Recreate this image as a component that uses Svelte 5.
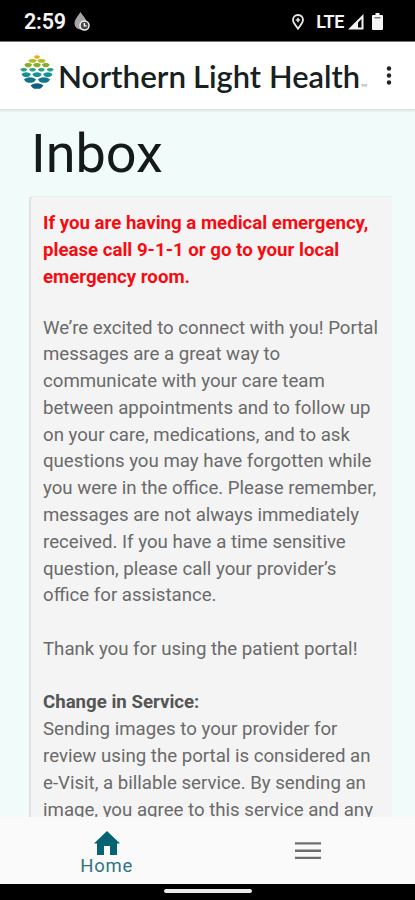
<script>
  const alert = [
    'If you are having a medical emergency,',
    'please call 9-1-1 or go to your local',
    'emergency room.',
  ]

  const intro = [
    'We’re excited to connect with you! Portal',
    'messages are a great way to',
    'communicate with your care team',
    'between appointments and to follow up',
    'on your care, medications, and to ask',
    'questions you may have forgotten while',
    'you were in the office. Please remember,',
    'messages are not always immediately',
    'received. If you have a time sensitive',
    'question, please call your provider’s',
    'office for assistance.',
  ]

  const service = [
    'Sending images to your provider for',
    'review using the portal is considered an',
    'e-Visit, a billable service. By sending an',
    'image, you agree to this service and any',
  ]

  // Rows of the logo: vertical centre, scale size and count
  const rows = [
    { y: 2,    n: 1, w: 6,    h: 3.4, step: 0,    color: '#f5a81c' },
    { y: 5.8,  n: 2, w: 8.4,  h: 3.8, step: 9,    color: '#b3bd21' },
    { y: 10.2, n: 3, w: 7.8,  h: 4.2, step: 8.8,  color: '#86ae2b' },
    { y: 14.8, n: 4, w: 7,    h: 3.6, step: 8.8,  color: '#2ba084' },
    { y: 19.6, n: 3, w: 9.4,  h: 4.6, step: 10.8, color: '#16919a' },
    { y: 25,   n: 2, w: 12,   h: 5.4, step: 14,   color: '#12738a' },
    { y: 31,   n: 1, w: 12.6, h: 5.6, step: 0,    color: '#105f7c' },
  ]

  const scales = rows.flatMap(r =>
    Array.from({ length: r.n }, (_, i) => ({
      ...r,
      x: 17 + (i - (r.n - 1) / 2) * r.step,
    }))
  )

  // Low crown on top, deep bowl below
  function scalePath({ x, y, w, h }) {
    const l = x - w / 2
    const r = x + w / 2
    const top = y - h / 2
    const bottom = y + h / 2
    return `M${l} ${y - h * 0.15}Q${x - w * 0.3} ${top} ${x} ${top}Q${x + w * 0.3} ${top} ${r} ${y - h * 0.15}C${x + w * 0.36} ${bottom} ${x + w * 0.2} ${bottom} ${x} ${bottom}C${x - w * 0.2} ${bottom} ${x - w * 0.36} ${bottom} ${l} ${y - h * 0.15}Z`
  }
</script>

<div class="screen">
  <div class="status">
    <span class="time">2:59</span>
    <svg class="drop" viewBox="0 0 16 20" width="16" height="20">
      <path d="M6.500 0C4 4 .5 7.600 .5 11.500a6 6 0 0 0 6 6c4 0 6.500-2.500 6.500-6C13 7.600 9 4 6.500 0Z" fill="#a5a5a5" />
      <circle cx="10.500" cy="13.500" r="4.500" fill="#444" stroke="#eee" stroke-width="1.500" />
      <path d="M10.300 11v2.800h2.300" fill="none" stroke="#fff" stroke-width="1.300" />
    </svg>
    <span class="spacer"></span>
    <svg class="pin" viewBox="0 0 12 16" width="12" height="16">
      <path d="M6 1C3 1 1 3.200 1 6c0 3.200 3 5.500 5 8.700C8 11.500 11 9.200 11 6c0-2.800-2-5-5-5Z" fill="none" stroke="#e8e8e8" stroke-width="1.800" />
      <path d="M6 3.800v4.400M3.800 6h4.400" stroke="#ddd" stroke-width="1.700" />
    </svg>
    <span class="lte">LTE</span>
    <svg class="signal" viewBox="0 0 16 16" width="16" height="16">
      <path d="M15.500 0V15.500H0Z" fill="#f2f2f2" />
      <path d="M13.500 5v8.500H10V8.500Z" fill="#000" />
    </svg>
    <svg class="battery" viewBox="0 0 11 17" width="11" height="17">
      <path d="M3.500 0h4v2H10q1 0 1 1v13q0 1-1 1H1q-1 0-1-1V3q0-1 1-1h2.500Z" fill="#f5f5f5" />
      <path d="M2.500 4h6v1.500h-6Z" fill="#777" />
    </svg>
  </div>

  <header>
    <svg class="logo" viewBox="0 0 34 35" width="34" height="35">
      {#each scales as s}
        <path d={scalePath(s)} fill={s.color} />
      {/each}
    </svg>
    <svg class="wordmark" viewBox="0 0 312 42" width="312" height="42">
      <text class="name" y="29.600">
        <tspan x="-1" textLength="128" lengthAdjust="spacingAndGlyphs">Northern</tspan>
        <tspan x="134" textLength="68" lengthAdjust="spacingAndGlyphs">Light</tspan>
        <tspan x="210" textLength="91" lengthAdjust="spacingAndGlyphs">Health</tspan>
      </text>
      <text class="tm" x="302" y="29">TM</text>
    </svg>
    <svg class="more" viewBox="0 0 6 20" width="6" height="20">
      <circle cx="3" cy="2.500" r="2.200" />
      <circle cx="3" cy="9.500" r="2.200" />
      <circle cx="3" cy="16.500" r="2.200" />
    </svg>
  </header>

  <main>
    <h1>Inbox</h1>
    <section class="card">
      <p class="alert">
        {#each alert as line}<span>{line}</span>{/each}
      </p>
      <p>
        {#each intro as line}<span>{line}</span>{/each}
      </p>
      <p><span>Thank you for using the patient portal!</span></p>
      <p>
        <strong>Change in Service:</strong>
        {#each service as line}<span>{line}</span>{/each}
      </p>
    </section>
  </main>

  <nav>
    <div class="tab active">
      <svg viewBox="0 0 28 24" width="28" height="24">
        <path d="M14 0L27 12.500H24V24H17V15H11V24H4V12.500H1Z" />
      </svg>
      <span>Home</span>
    </div>
    <div class="tab">
      <svg viewBox="0 0 26 18" width="26" height="18">
        <path d="M0 .2h26v2.400H0ZM0 7.600h26v2.400H0ZM0 14.700h26v2.400H0Z" />
      </svg>
    </div>
  </nav>
  <div class="gesture"><span></span></div>
</div>

<style>
  .screen {
    display: flex;
    flex-direction: column;
    width: 415px;
    height: 900px;
    overflow: hidden;
    background: #f1fbfa;
    font-family: Roboto, sans-serif;
  }

  .status {
    display: flex;
    align-items: center;
    flex: none;
    box-sizing: border-box;
    height: 42px;
    padding: 2px 32px 0 24px;
    background: #000;
    border-bottom: 1px solid #777;
    color: #f5f5f5;
  }
  .time {
    width: 43px;
    font-size: 21.5px;
    font-weight: 600;
    letter-spacing: -0.2px;
    white-space: nowrap;
  }
  .drop { margin-left: 7px; }
  .spacer { flex: 1; }
  .lte {
    margin: 0 4px 0 12px;
    font-size: 18px;
    font-weight: 600;
    letter-spacing: -0.4px;
  }
  .battery { margin-left: 8px; }

  header {
    display: flex;
    flex: none;
    box-sizing: border-box;
    height: 68px;
    padding: 13px 0 0 20px;
    background: #fff;
    border-bottom: 1px solid #dfe4e4;
    box-shadow: 0 1px 2px rgba(0, 0, 0, 0.1);
  }
  .wordmark {
    margin: 3px 0 0 5px;
    overflow: visible;
  }
  .name {
    font: 600 30.5px Lato, sans-serif;
    fill: #17211f;
  }
  .tm {
    font: 4px Lato, sans-serif;
    fill: #777;
  }
  .more {
    margin: 11px 0 0 15px;
    fill: #222;
  }

  main {
    flex: 1;
    min-height: 0;
    overflow: hidden;
    padding: 12px 23px 0 29px;
  }
  h1 {
    margin: 0 0 10px 2px;
    font-size: 54px;
    font-weight: 400;
    line-height: 64px;
    color: #16191a;
  }
  .card {
    height: 700px;
    box-sizing: border-box;
    padding: 13px 0 0 12px;
    background: #f4f4f4;
    border-left: 2px solid #dde2e2;
    border-top: 1px solid #e9eded;
    border-top-left-radius: 4px;
  }
  p {
    margin: 0 0 26.78px;
    font-size: 18.65px;
    line-height: 26.78px;
    color: #6a6a6a;
  }
  p span, p strong {
    display: block;
    white-space: nowrap;
  }
  strong {
    font-weight: 700;
    color: #555;
  }
  .alert {
    margin-bottom: 24.2px;
    font-weight: 700;
    color: #f90a10;
  }

  nav {
    display: flex;
    flex: none;
    height: 67px;
    padding: 0 6px;
    background: #fafafa;
  }
  .tab {
    display: flex;
    flex: 1;
    flex-direction: column;
    align-items: center;
    justify-content: center;
    font-size: 18.5px;
    fill: #6f6f6f;
  }
  .tab.active {
    box-sizing: border-box;
    padding-top: 6px;
    fill: #066472;
    color: #2f7480;
  }
  .tab.active span {
    letter-spacing: 0.8px;
  }

  .gesture {
    display: flex;
    justify-content: center;
    flex: none;
    height: 16px;
    background: #000;
  }
  .gesture span {
    width: 88px;
    height: 4px;
    margin-top: 5px;
    border-radius: 2px;
    background: #ececec;
  }
</style>
